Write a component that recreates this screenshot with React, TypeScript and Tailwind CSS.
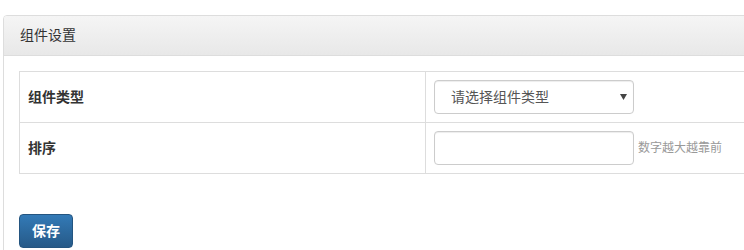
export default function App() {
  return (
    <div className="w-[744px] h-[250px] overflow-hidden bg-white pt-[15px] pl-[3px] font-['Liberation_Sans','Noto_Sans_CJK_SC',sans-serif] text-[14px] text-[#333]">
      <div className="w-[820px] border border-[#ddd] rounded-t-[4px] bg-white">
        <div className="h-[40px] px-[16px] flex items-center bg-linear-to-b from-[#f5f5f5] to-[#e8e8e8] border-b border-[#ddd] rounded-t-[3px]">
          组件设置
        </div>
        <div className="p-[15px]">
          <div className="w-[790px] border border-[#ddd]">
            <div className="flex border-b border-[#ddd]">
              <div className="w-[406px] border-r border-[#ddd] px-[8px] flex items-center font-bold">组件类型</div>
              <div className="p-[8px]">
                <div className="w-[200px] h-[34px] border border-[#ccc] rounded-[4px] flex items-center justify-between pl-[16px] pr-[6px] text-[#555] shadow-[inset_0_1px_1px_rgba(0,0,0,0.075)]">
                  <span>请选择组件类型</span>
                  <svg width="7" height="6" viewBox="0 0 7 6">
                    <path d="M0 0h7L3.5 6z" fill="#444" />
                  </svg>
                </div>
              </div>
            </div>
            <div className="flex">
              <div className="w-[406px] border-r border-[#ddd] px-[8px] flex items-center font-bold">排序</div>
              <div className="p-[8px] flex items-center">
                <input
                  type="text"
                  className="w-[200px] h-[34px] border border-[#ccc] rounded-[4px] px-[12px] text-[#555] outline-none shadow-[inset_0_1px_1px_rgba(0,0,0,0.075)]"
                />
                <span className="ml-[4px] text-[12px] text-[#999]">数字越大越靠前</span>
              </div>
            </div>
          </div>
          <button className="mt-[40px] h-[34px] px-[12px] rounded-[4px] border border-[#245580] bg-linear-to-b from-[#337ab7] to-[#265a88] text-white font-bold text-[14px]">
            保存
          </button>
        </div>
      </div>
    </div>
  );
}
